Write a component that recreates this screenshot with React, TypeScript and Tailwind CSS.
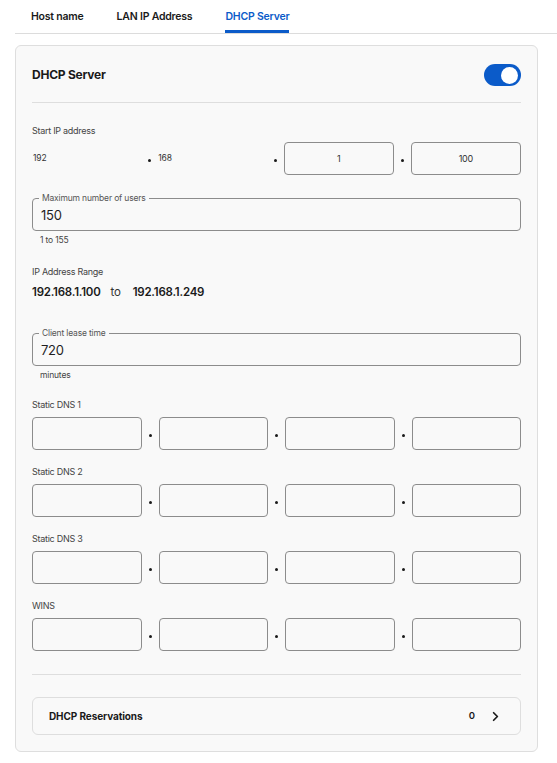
import { ChevronRight } from 'lucide-react';

const font = { fontFamily: 'Inter, "Noto Sans", sans-serif' };

function Dot() {
  return (
    <div className="flex w-[17px] shrink-0 items-center justify-center">
      <span className="mt-[3px] h-[3px] w-[3px] rounded-full bg-[#1a1a1a]" />
    </div>
  );
}

function Box({ value }: { value?: string }) {
  return (
    <div className="flex h-[33px] flex-1 items-center justify-center rounded-[4px] border border-[#8c8c8c] text-[9px] tracking-[-0.02em] text-[#333]">
      {value}
    </div>
  );
}

function IpRow({ values }: { values?: string[] }) {
  return (
    <div className="flex h-[33px] items-stretch">
      <Box value={values?.[0]} />
      <Dot />
      <Box value={values?.[1]} />
      <Dot />
      <Box value={values?.[2]} />
      <Dot />
      <Box value={values?.[3]} />
    </div>
  );
}

function OutlinedField({ label, value }: { label: string; value: string }) {
  return (
    <div className="relative flex h-[33px] items-center rounded-[4px] border border-[#8c8c8c] pl-2 pt-[2px] text-[13px] tracking-[-0.02em] text-[#1f1f1f]">
      <span className="absolute -top-[7px] left-[6px] bg-[#f9f9f9] px-[3px] text-[8.5px] leading-[12px] tracking-[-0.02em] text-[#555]">
        {label}
      </span>
      {value}
    </div>
  );
}

function Label({ children, className = '' }: { children: string; className?: string }) {
  return (
    <div className={`text-[9px] leading-[14px] tracking-[-0.03em] text-[#444] ${className}`}>{children}</div>
  );
}

export default function App() {
  const dns = ['Static DNS 1', 'Static DNS 2', 'Static DNS 3', 'WINS'];

  return (
    <main className="min-h-screen w-[557px] bg-white text-[#1a1a1a]" style={font}>
      <nav className="ml-[15px] flex h-[34px] items-stretch border-b border-[#dcdcdc] pl-4 text-[10.5px] font-semibold tracking-[-0.02em]">
        <div className="flex items-center">Host name</div>
        <div className="ml-[33px] flex items-center">LAN IP Address</div>
        <div className="ml-[33px] flex items-center border-b-[3px] border-[#0b5bc9] pt-[3px] text-[#0b5bc9]">
          DHCP Server
        </div>
      </nav>

      <section className="ml-[15px] mt-[11px] w-[523px] rounded-[6px] border border-[#dedede] bg-[#f9f9f9] px-4 pb-4">
        <div className="flex h-[57px] items-center justify-between border-b border-[#dedede] pt-[2px]">
          <h2 className="text-[12px] font-bold tracking-[-0.02em]">DHCP Server</h2>
          <div className="flex h-[22px] w-[37px] items-center justify-end rounded-full bg-[#0b5bc9] pr-[3px]">
            <span className="h-[17px] w-[17px] rounded-full bg-white" />
          </div>
        </div>

        <Label className="mt-[21px]">Start IP address</Label>
        <div className="mt-[4px] flex h-[33px] items-stretch text-[8.5px] tracking-[-0.02em] text-[#333]">
          <div className="flex flex-1 items-center pl-px">192</div>
          <div className="flex w-[17px] shrink-0 items-center justify-center">
            <span className="mt-[3px] h-[3px] w-[3px] rounded-full bg-[#1a1a1a]" />
          </div>
          <div className="flex flex-1 items-center">168</div>
          <Dot />
          <Box value="1" />
          <Dot />
          <Box value="100" />
        </div>

        <div className="mt-[23px]">
          <OutlinedField label="Maximum number of users" value="150" />
        </div>
        <div className="mt-[2px] pl-2 text-[8.5px] leading-[14px] tracking-[-0.02em] text-[#444]">1 to 155</div>

        <Label className="mt-[18px]">IP Address Range</Label>
        <div className="mt-[4px] flex items-center text-[11.5px] leading-[18px] tracking-[-0.02em]">
          <span className="font-semibold">192.168.1.100</span>
          <span className="ml-[10px] font-normal text-[#333]">to</span>
          <span className="ml-[12px] font-semibold">192.168.1.249</span>
        </div>

        <div className="mt-[32px]">
          <OutlinedField label="Client lease time" value="720" />
        </div>
        <div className="mt-[2px] pl-2 text-[8.5px] leading-[14px] tracking-[-0.02em] text-[#444]">minutes</div>

        {dns.map((name, i) => (
          <div key={name} className={i === 0 ? 'mt-[16px]' : 'mt-[15px]'}>
            <Label>{name}</Label>
            <div className="mt-[5px]">
              <IpRow />
            </div>
          </div>
        ))}

        <div className="mt-[23px] border-t border-[#dedede]" />

        <button className="mt-[22px] flex h-[38px] w-full items-center justify-between rounded-[6px] border border-[#dedede] bg-[#f9f9f9] pl-4 pr-[17px]">
          <span className="text-[10px] font-bold tracking-[-0.01em]">DHCP Reservations</span>
          <span className="flex items-center gap-[13px]">
            <span className="text-[9.5px] font-semibold">0</span>
            <ChevronRight className="h-[15px] w-[15px]" strokeWidth={2.75} />
          </span>
        </button>
      </section>
    </main>
  );
}
